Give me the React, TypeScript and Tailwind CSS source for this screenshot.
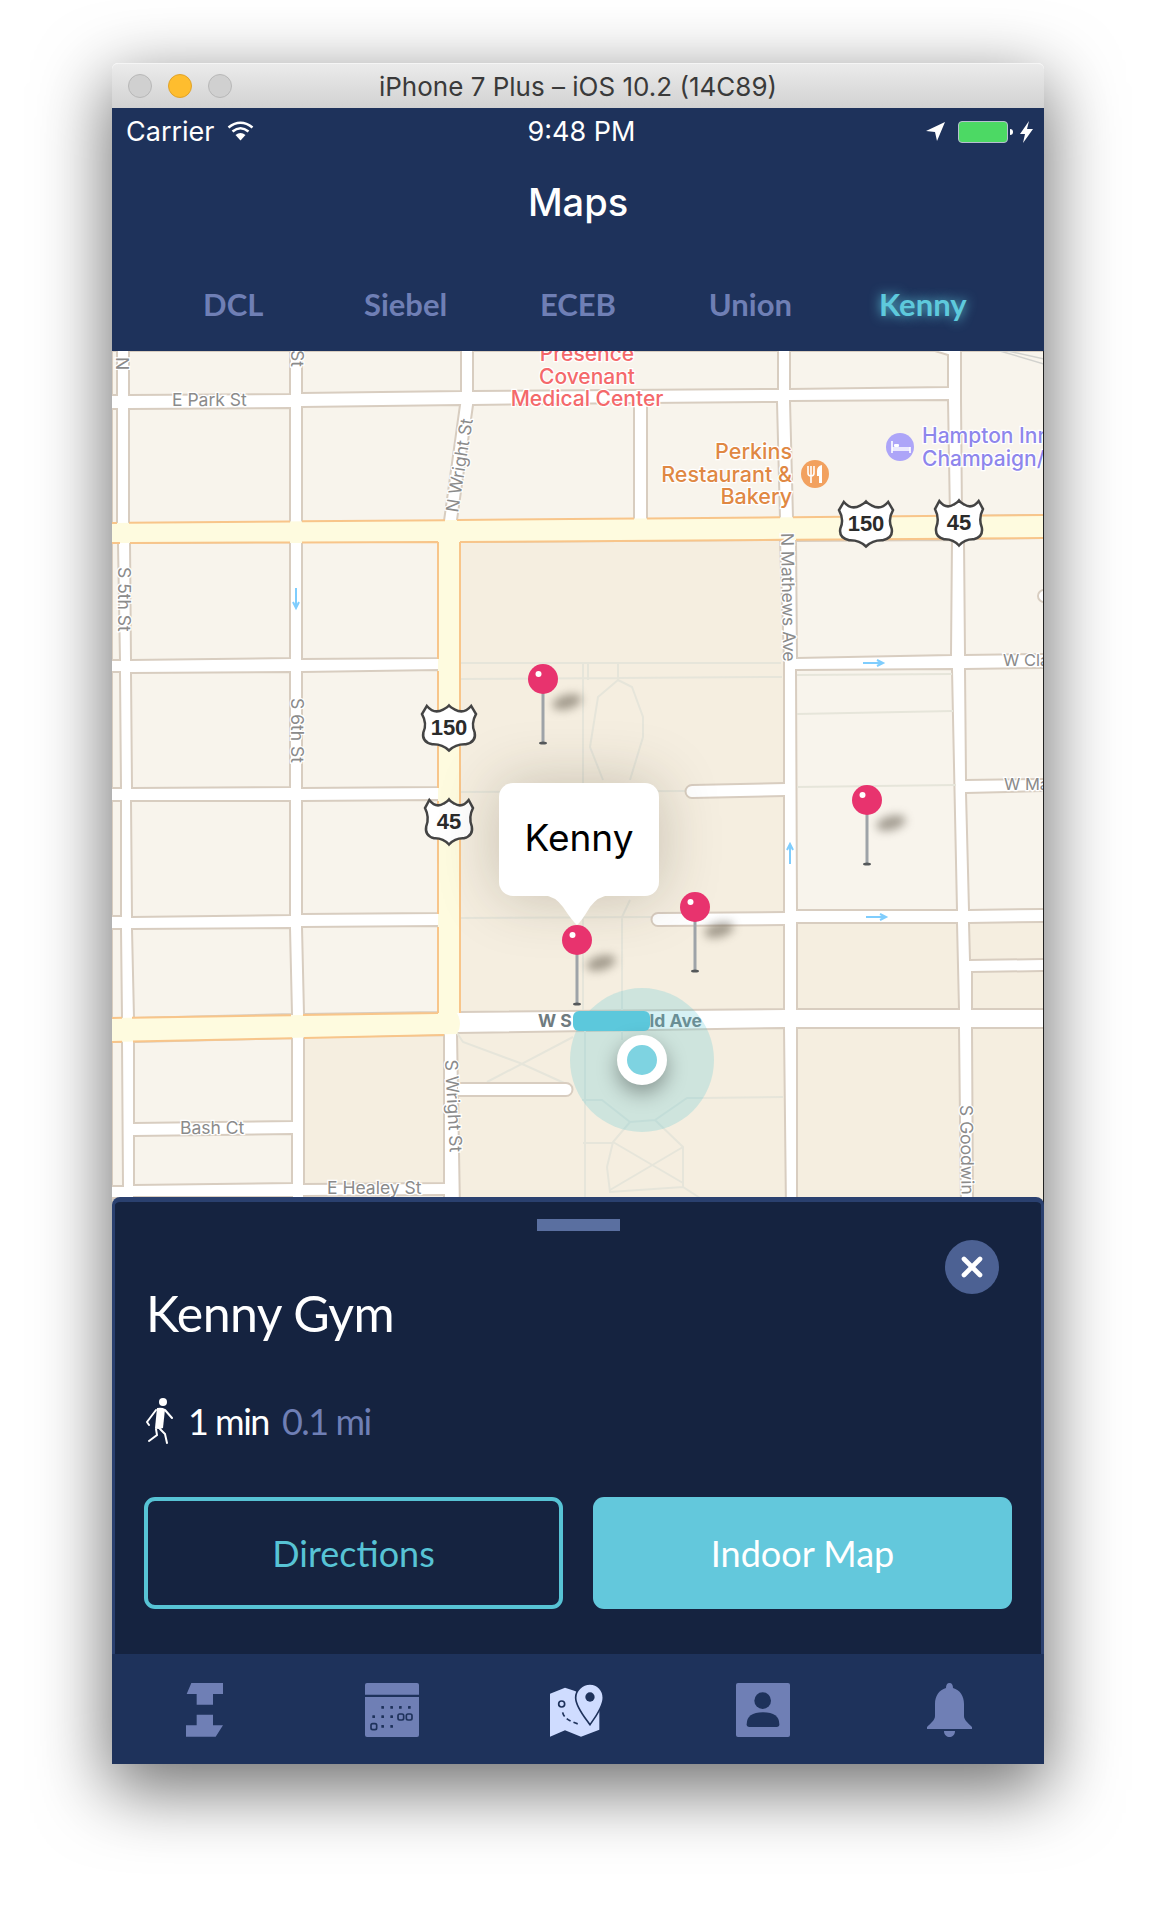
import { X } from "lucide-react";

const ROAD_STROKE = "#d8cdc0";

// blocks in page coordinates (the map svg uses a matching viewBox)
const plainBlocks = [
  "112,351 117,351 117,395 112,395",
  "129,351 290,351 290,394 129,395",
  "302,351 461,351 461,391 302,393",
  "473,351 778,351 778,389 473,391",
  "790,351 935,351 948,355 948,387 790,389",
  "961,351 1044,351 1044,515 962,516 961,400",
  "112,409 117,409 117,523 112,523",
  "129,409 290,408 290,523 129,523",
  "302,407 460,405 444,521 302,522",
  "473,405 634,403 634,520 457,520",
  "647,403 777,402 780,518 647,520",
  "790,401 948,400 950,517 793,518",
  "112,543 118,543 120,660 112,660",
  "130,543 290,542 290,658 131,660",
  "302,542 438,542 438,658 302,659",
  "796,541 952,540 951,655 797,658",
  "964,539 1044,538 1044,654 965,655",
  "112,672 120,672 121,788 112,788",
  "131,673 290,672 290,787 132,788",
  "302,672 438,670 438,787 302,788",
  "796,670 952,669 957,910 797,910",
  "965,669 1044,668 1044,779 966,780",
  "112,801 121,801 121,916 112,916",
  "131,801 290,801 290,915 132,917",
  "302,801 438,800 438,913 302,914",
  "966,793 1044,791 1044,909 969,910",
  "112,929 121,929 122,1018 112,1018",
  "132,929 290,928 292,1014 134,1018",
  "302,927 438,926 438,1012 304,1014",
  "112,1042 122,1042 123,1186 112,1186",
  "134,1042 292,1038 292,1121 134,1123",
  "134,1136 292,1134 292,1183 134,1185",
  "112,1198 123,1198 123,1210 112,1210",
  "134,1197 292,1197 292,1210 134,1210",
  "304,1196 444,1195 444,1210 304,1210",
];

const campusBlocks = [
  "460,542 780,540 784,660 784,1009 460,1012",
  "457,1033 784,1028 786,1210 460,1210",
  "304,1037 444,1035 444,1183 304,1184",
  "797,923 957,923 959,1009 797,1009",
  "969,923 1044,922 1044,959 970,960",
  "972,972 1044,971 1044,1009 972,1009",
  "797,1028 959,1028 961,1210 797,1210",
  "972,1028 1044,1028 1044,1210 973,1210",
];

const campusPaths = [
  "M460 663 L781 663 M460 679 L782 677 M583 663 V1010 M588 663 V680 M618 663 V680",
  "M618 680 L632 687 L643 717 L643 737 L630 780 M618 680 L598 697 L590 747 L603 780",
  "M630 900 L622 917 V1010 M460 918 L651 917 M460 792 L685 791",
  "M582 1100 H602 L630 1122 L655 1120 L687 1098 H700 L783 1097 M622 1028 V1040",
  "M613 1142 L683 1183 M683 1147 L610 1190 M630 1122 L613 1142 L607 1167 L610 1192 L683 1187 L700 1198 M655 1120 L683 1147 V1187 M583 1143 H613 M585 1030 V1210",
  "M457 1033 L463 1042 L520 1063 L573 1087 M573 1037 L487 1082",
  "M797 675 L952 674 M797 714 L953 711 M797 787 L956 785",
];

type Edge = [number, number, number, number, [number, number][]];

// orange casing of the highway, broken where a white street meets it
const highwayEdges: Edge[] = [
  [112, 523, 1044, 515, [[117, 129], [290, 302], [445, 457], [634, 647], [780, 793], [950, 962]]],
  [112, 543, 438, 542, [[120, 130], [290, 302]]],
  [460, 542, 1044, 538, [[784, 796], [952, 964]]],
  [438, 542, 438, 1013, [[659, 671], [788, 801], [914, 927]]],
  [460, 542, 460, 1013, []],
  [112, 1018, 438, 1013, [[122, 132], [291, 303]]],
  [112, 1042, 444, 1035, [[122, 133], [292, 304]]],
];

function edgePath([x0, y0, x1, y1, gaps]: Edge) {
  const vertical = x0 === x1;
  const start = vertical ? y0 : x0;
  const end = vertical ? y1 : x1;
  const point = (p: number) => {
    const t = (p - start) / (end - start);
    return vertical ? `${x0} ${p}` : `${p} ${y0 + (y1 - y0) * t}`;
  };
  let d = "";
  let from = start;
  for (const [a, b] of gaps) {
    d += `M${point(from)} L${point(a)} `;
    from = b;
  }
  return d + `M${point(from)} L${point(end)}`;
}

function Label({ x, y, rotate = 0, size = 17.5, children }: { x: number; y: number; rotate?: number; size?: number; children: string }) {
  return (
    <text
      x={x}
      y={y}
      transform={rotate ? `rotate(${rotate} ${x} ${y})` : undefined}
      fontSize={size}
      fill="#8b8b8b"
      stroke="#ffffff"
      strokeWidth="2.5"
      paintOrder="stroke"
    >
      {children}
    </text>
  );
}

function Poi({ x, y, lines, color, anchor = "start", size = 21 }: { x: number; y: number; lines: string[]; color: string; anchor?: "start" | "middle" | "end"; size?: number }) {
  return (
    <text fontSize={size} fontWeight="500" fill={color} stroke="#ffffff" strokeWidth="2.5" paintOrder="stroke" textAnchor={anchor}>
      {lines.map((line, i) => (
        <tspan key={line} x={x} y={y + i * 22.5}>
          {line}
        </tspan>
      ))}
    </text>
  );
}

function Shield({ x, y, w, label }: { x: number; y: number; w: number; label: string }) {
  return (
    <g>
      <g transform={`translate(${x} ${y}) scale(${w / 2} 22.5)`}>
        <path
          d="M-.82 -.98 Q-.55 -.6 -.22 -.82 Q-.05 -.92 0 -1 Q.05 -.92 .22 -.82 Q.55 -.6 .82 -.98 L1 -.62 Q.8 -.2 .95 .2 Q1.02 .62 .62 .72 Q.25 .7 0 1 Q-.25 .7 -.62 .72 Q-1.02 .62 -.95 .2 Q-.8 -.2 -1 -.62 Z"
          fill="#ffffff"
          stroke="#444444"
          strokeWidth="2.5"
          vectorEffect="non-scaling-stroke"
        />
      </g>
      <text x={x} y={y + 7} textAnchor="middle" fontSize="22" fontWeight="700" fill="#2b2b2b" fontFamily="Liberation Sans, sans-serif">
        {label}
      </text>
    </g>
  );
}

function Arrow({ d }: { d: string }) {
  return <path d={d} fill="none" stroke="#7fcdfd" strokeWidth="2" />;
}

function MapSvg() {
  return (
    <svg viewBox="112 351 932 854" width="932" height="854" className="block [font-family:Inter,sans-serif]">
      <rect x="112" y="351" width="932" height="854" fill="#ffffff" />
      {plainBlocks.map((points) => (
        <polygon key={points} points={points} fill="#f8f4ec" stroke={ROAD_STROKE} strokeWidth="2" />
      ))}
      {campusBlocks.map((points) => (
        <polygon key={points} points={points} fill="#f5eee0" stroke={ROAD_STROKE} strokeWidth="2" />
      ))}
      <path d={campusPaths.join(" ")} fill="none" stroke="#e6e5da" strokeWidth="2" />
      <path d="M1000 351 L1044 364 M1008 351 L1044 359" fill="none" stroke="#d2d2ce" strokeWidth="1.5" />

      {/* dead-end service roads inside the campus */}
      <path d="M785 783 L692 785 A6.5 6.5 0 0 0 692 798 L785 796" fill="#ffffff" stroke={ROAD_STROKE} strokeWidth="2" />
      <path d="M785 912 L658 913 A6.5 6.5 0 0 0 658 926 L785 925" fill="#ffffff" stroke={ROAD_STROKE} strokeWidth="2" />
      <path d="M458 1083 L566 1083 A6.5 6.5 0 0 1 566 1096 L458 1096" fill="#ffffff" stroke={ROAD_STROKE} strokeWidth="2" />
      <circle cx="1044" cy="596" r="6" fill="#ffffff" stroke={ROAD_STROKE} strokeWidth="2" />

      <path d="M112 523 L1044 515 L1044 538 L460 542 L460 1013 L457 1013 Q463 1024 457 1034 L112 1042 L112 1018 L438 1013 L438 543 L112 543 Z" fill="#fefbdf" />
      <path d={highwayEdges.map(edgePath).join(" ")} fill="none" stroke="#f8c58a" strokeWidth="2" />

      <Arrow d="M296 588 V607 M293 602 L296 608 L299 602" />
      <Arrow d="M863 663 H882 M877 660 L883 663 L877 666" />
      <Arrow d="M790 864 V845 M787 850 L790 844 L793 850" />
      <Arrow d="M866 917 H886 M880 914 L886 917 L880 920" />

      <Label x={172} y={406}>E Park St</Label>
      <Label x={291} y={350} rotate={90}>St</Label>
      <Label x={116} y={357} rotate={90}>N</Label>
      <Label x={458} y={513} rotate={-81}>N Wright St</Label>
      <Label x={118} y={567} rotate={90}>S 5th St</Label>
      <Label x={291} y={698} rotate={90}>S 6th St</Label>
      <Label x={781} y={533} rotate={89}>N Mathews Ave</Label>
      <Label x={1003} y={666} size={16.5}>W Cla</Label>
      <Label x={1004} y={790} size={16.5}>W Ma</Label>
      <Label x={445} y={1060} rotate={87}>S Wright St</Label>
      <Label x={180} y={1134}>Bash Ct</Label>
      <Label x={327} y={1194}>E Healey St</Label>
      <Label x={960} y={1105} rotate={89}>S Goodwin</Label>

      <Poi x={587} y={361} lines={["Presence", "Covenant", "Medical Center"]} color="#f4696b" anchor="middle" />
      <Poi x={792} y={459} lines={["Perkins", "Restaurant &", "Bakery"]} color="#e08843" anchor="end" size={21.5} />
      <Poi x={922} y={443} lines={["Hampton Inn", "Champaign/"]} color="#8e86ec" />

      <circle cx="815" cy="474" r="14" fill="#f2a15f" />
      <path d="M808 466 V473 Q808 476 811 476 V483 M811 466 V476 M814 466 V473 Q814 476 811 476" fill="none" stroke="#ffffff" strokeWidth="1.6" />
      <path d="M822 465 V483 H819 V476 H817 V471 Q817 466 822 465 Z" fill="#ffffff" />

      <circle cx="900" cy="447" r="14" fill="#ada5f8" />
      <path d="M892 441 V453 M910 447 V453 M892 450 H910 M892 448 H910" fill="none" stroke="#ffffff" strokeWidth="1.6" />
      <rect x="894" y="444" width="5" height="3" rx="1" fill="#ffffff" />

      <Shield x={866} y={524} w={54} label="150" />
      <Shield x={959} y={523} w={48} label="45" />
      <Shield x={449} y={728} w={54} label="150" />
      <Shield x={449} y={822} w={48} label="45" />

      <text x={538} y={1027} fontSize="17.5" fontWeight="700" fill="#6f7b80">W S</text>
      <text x={702} y={1027} fontSize="17.5" fontWeight="700" fill="#6f7b80" textAnchor="end">ld Ave</text>
      <circle cx="642" cy="1060" r="72" fill="#5ac6d4" fillOpacity="0.25" />
      <rect x="573" y="1011" width="77" height="20" rx="6" fill="#5cc8dc" />
    </svg>
  );
}

function Pin({ className }: { className: string }) {
  return (
    <svg width="80" height="90" viewBox="0 0 80 90" className={`absolute ${className}`}>
      <ellipse cx="44" cy="41" rx="15" ry="7" transform="rotate(-15 44 41)" fill="#5c5446" opacity="0.55" className="blur-[5px]" />
      <rect x="18.5" y="32" width="3" height="50" fill="#9ea3a8" />
      <ellipse cx="20" cy="82" rx="4" ry="1.6" fill="#55585a" />
      <circle cx="20" cy="18" r="15" fill="#e8336e" />
      <circle cx="15.5" cy="13" r="3" fill="#ffffff" />
    </svg>
  );
}

function MapView() {
  return (
    <div className="relative h-[854px] overflow-hidden border-r border-[#222222]">
      <MapSvg />
      <div className="absolute left-[387px] top-[432px] flex h-[113px] w-[160px] items-center justify-center rounded-[14px] bg-white pb-[4px] text-[37px] text-black shadow-[0_0_60px_rgba(60,50,30,0.25)] [font-family:Inter,sans-serif]">
        Kenny
        <svg width="67" height="30" viewBox="0 0 67 30" className="absolute left-[44px] top-[112px]">
          <path d="M0 0 Q12 1 20 12 Q30 27 34 30 Q38 27 47 12 Q55 1 67 0 Z" fill="#ffffff" />
        </svg>
      </div>
      <div className="absolute left-[505px] top-[684px] size-[50px] rounded-full border-[10px] border-white bg-[#7ed3e1] shadow-[0_8px_20px_rgba(0,0,0,0.35)]" />
      <Pin className="left-[411px] top-[310px]" />
      <Pin className="left-[735px] top-[431px]" />
      <Pin className="left-[563px] top-[538px]" />
      <Pin className="left-[445px] top-[571px]" />
    </div>
  );
}

function TitleBar() {
  return (
    <div className="relative flex h-[45px] items-center justify-center rounded-t-[6px] border-t border-[#f5f5f5] bg-gradient-to-b from-[#ebebeb] to-[#d2d2d2] [font-family:Inter,sans-serif]">
      <div className="absolute left-[16px] top-[10px] flex gap-[16px]">
        <span className="size-[24px] rounded-full border border-[#b8b8b8] bg-[#d0d0d0]" />
        <span className="size-[24px] rounded-full border border-[#e0a32a] bg-[#febd2e]" />
        <span className="size-[24px] rounded-full border border-[#b8b8b8] bg-[#d0d0d0]" />
      </div>
      <span className="text-[26px] text-[#3a3a3a]">iPhone 7 Plus – iOS 10.2 (14C89)</span>
    </div>
  );
}

function StatusBar() {
  return (
    <div className="grid h-[48px] grid-cols-[1fr_auto_1fr] items-center pl-[14px] pr-[11px] text-[27px] text-white [font-family:Inter,sans-serif]">
      <div className="flex items-center gap-[12px]">
        Carrier
        <svg width="27" height="21" viewBox="0 0 27 21" fill="none" stroke="#ffffff" strokeWidth="2.6" className="-mt-[4px]">
          <path d="M1.5 7.5 Q13.5 -2 25.5 7.5" />
          <path d="M5.5 11.5 Q13.5 5 21.5 11.5" />
          <path d="M13.5 20.5 L8.5 15 Q13.5 11 18.5 15 Z" fill="#ffffff" stroke="none" />
        </svg>
      </div>
      <div className="pl-[4px]">9:48 PM</div>
      <div className="flex items-center justify-end gap-[12px]">
        <svg width="20" height="20" viewBox="0 0 20 20">
          <path d="M19 0 L0 9 L9 10 L11 19 Z" fill="#ffffff" />
        </svg>
        <div className="mr-[-5px] flex items-center gap-[2px]">
          <div className="h-[22px] w-[50px] rounded-[4px] border border-[#b6bfd0] bg-[#4cd964] p-[1px]" />
          <div className="h-[6px] w-[3px] rounded-r-full bg-white" />
        </div>
        <svg width="13" height="22" viewBox="0 0 13 22">
          <path d="M9 0 L0 13 H5 L3 22 L13 8 H7 Z" fill="#ffffff" />
        </svg>
      </div>
    </div>
  );
}

function Tabs() {
  const tabs = ["DCL", "Siebel", "ECEB", "Union", "Kenny"];
  return (
    <div className="grid grid-cols-5 px-[35px] pt-[60px] [font-family:Lato,sans-serif]">
      {tabs.map((tab) => (
        <div
          key={tab}
          className={
            tab === "Kenny"
              ? "text-center text-[31px] font-bold leading-[40px] text-[#5ec9dc] [text-shadow:0_0_12px_#5ec9dc]"
              : "text-center text-[31px] font-bold leading-[40px] text-[#6f7fb5]"
          }
        >
          {tab}
        </div>
      ))}
    </div>
  );
}

function WalkIcon() {
  return (
    <svg width="27" height="46" viewBox="0 0 27 46" fill="none" stroke="#ffffff" strokeWidth="2" strokeLinecap="round">
      <circle cx="17" cy="4" r="4" fill="#ffffff" stroke="none" />
      <path d="M11 10 Q16 9 19 11 L17 30 Q12 32 9 30 Z" fill="#ffffff" stroke="none" />
      <path d="M10 12 L1 24 L3 27 M19 12 L26 20 M10 31 L11 37 L3 43 M14 31 L19 36 L21 45" />
    </svg>
  );
}

function Panel() {
  return (
    <div className="relative z-10 -mt-[8px] h-[457px] rounded-t-[8px] border-x-[3px] border-t-[5px] border-[#2a406f] bg-[#152340] [font-family:Lato,sans-serif]">
      <div className="mx-auto mt-[17px] h-[12px] w-[83px] bg-[#5a6fa0]" />
      <div className="flex justify-end pr-[42px] pt-[9px]">
        <button className="flex size-[54px] items-center justify-center rounded-full bg-[#4c6193]">
          <X size={32} strokeWidth={3.5} className="text-white" />
        </button>
      </div>
      <h1 className="-mt-[13px] pl-[31px] text-[50px] font-normal leading-[64px] tracking-[-0.5px] text-white">Kenny Gym</h1>
      <div className="mt-[53px] flex items-center pl-[31px] text-[36px] font-normal leading-[46px] tracking-[-1.5px]">
        <WalkIcon />
        <span className="ml-[15px] text-white">1 min</span>
        <span className="ml-[13px] text-[#6f7fb5]">0.1 mi</span>
      </div>
      <div className="mt-[53px] grid grid-cols-2 gap-[30px] px-[29px]">
        <button className="flex h-[112px] items-center justify-center rounded-[11px] border-[4px] border-[#57c3d5] text-[36px] text-[#57c3d5]">
          Directions
        </button>
        <button className="flex h-[112px] items-center justify-center rounded-[11px] bg-[#63c8dc] text-[36px] text-white">
          Indoor Map
        </button>
      </div>
    </div>
  );
}

function TabBar() {
  const inactive = "#6f7fb5";
  const bg = "#1e325b";
  return (
    <div className="relative z-10 flex h-[110px] items-start bg-[#1e325b] pt-[29px]">
      <svg width="37" height="54" viewBox="0 0 111 162" className="ml-[74px]" fill={inactive}>
        <path d="M16 0 H111 V33 H81 V65 H32 V33 H2 Z" />
        <path d="M32 95 H81 V127 H111 L89 161 H0 V127 H32 Z" />
      </svg>
      <svg width="54" height="54" viewBox="0 0 162 162" className="ml-[142px]">
        <path d="M6 0 H156 Q162 0 162 6 V35 H0 V6 Q0 0 6 0 Z" fill={inactive} />
        <path d="M0 42 H162 V156 Q162 162 156 162 H6 Q0 162 0 156 Z" fill={inactive} />
        <g fill={bg}>
          {[[53, 70], [80, 70], [106, 70], [133, 70], [26, 98], [53, 98], [80, 98], [53, 127], [80, 127]].map(([x, y]) => (
            <rect key={`${x}-${y}`} x={x - 4} y={y - 1} width="8" height="8" rx="1.5" />
          ))}
        </g>
        <g fill="none" stroke={bg} strokeWidth="5">
          <rect x="99" y="93" width="17" height="18" rx="5" />
          <rect x="124" y="93" width="17" height="18" rx="5" />
          <rect x="18" y="122" width="17" height="18" rx="5" />
        </g>
      </svg>
      <svg width="54" height="54" viewBox="0 0 162 162" className="ml-[131px]">
        <path d="M0 32 L45 14 L75 24 L148 60 V140 L93 161 L45 142 L0 161 Z" fill="#cfdcff" />
        <path d="M120 3 C96 3 77 22 77 44 C77 72 108 108 120 125 C132 108 160 72 160 44 C160 22 144 3 120 3 Z" fill="#cfdcff" stroke={bg} strokeWidth="5" />
        <circle cx="120" cy="42" r="14" fill={bg} />
        <circle cx="35" cy="63" r="9" fill="none" stroke={bg} strokeWidth="5" />
        <path d="M38 88 Q42 112 92 125" fill="none" stroke={bg} strokeWidth="5" strokeDasharray="14 9" />
      </svg>
      <svg width="54" height="54" viewBox="0 0 162 162" className="ml-[132px]">
        <rect width="162" height="162" rx="6" fill={inactive} />
        <circle cx="80" cy="53" r="25" fill={bg} />
        <path d="M32 124 Q32 88 81 88 Q130 88 130 124 Q130 132 122 132 H40 Q32 132 32 124 Z" fill={bg} />
      </svg>
      <svg width="45" height="54" viewBox="0 0 45 54" className="ml-[137px]" fill={inactive}>
        <path d="M22.5 0 C25 0 26 2 26 5 C33 7 37 13 37 21 L37 33 C37 37 41 40 45 44 L45 46 L0 46 L0 44 C4 40 8 37 8 33 L8 21 C8 13 12 7 19 5 C19 2 20 0 22.5 0 Z" />
        <path d="M17 48 H28 C28 52 25 54 22.5 54 C20 54 17 52 17 48 Z" />
      </svg>
    </div>
  );
}

export default function App() {
  return (
    <div className="h-[1924px] w-[1156px] overflow-hidden bg-white pl-[112px] pt-[63px]">
      <div className="w-[932px] rounded-t-[6px] shadow-[0_22px_70px_4px_rgba(0,0,0,0.56)]">
        <TitleBar />
        <div className="h-[243px] bg-[#1e325b]">
          <StatusBar />
          <div className="pt-[24px] text-center text-[38px] font-medium leading-[44px] text-white [font-family:Inter,sans-serif]">Maps</div>
          <Tabs />
        </div>
        <MapView />
        <Panel />
        <TabBar />
      </div>
    </div>
  );
}
